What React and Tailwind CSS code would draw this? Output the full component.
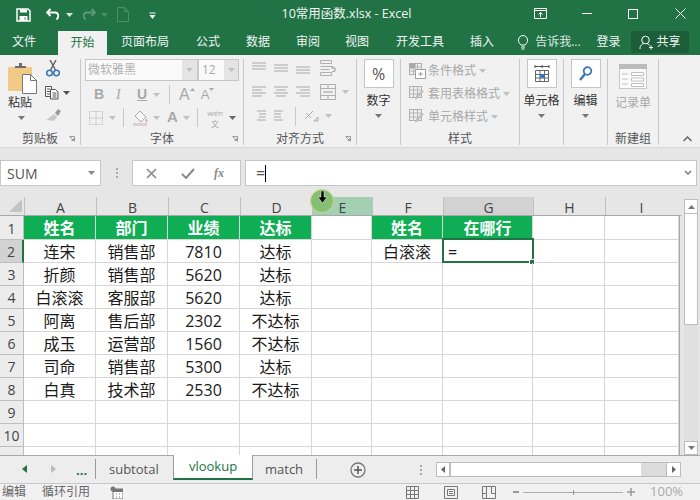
const rows = [
  ['连宋', '销售部', '7810', '达标'],
  ['折颜', '销售部', '5620', '达标'],
  ['白滚滚', '客服部', '5620', '达标'],
  ['阿离', '售后部', '2302', '不达标'],
  ['成玉', '运营部', '1560', '不达标'],
  ['司命', '销售部', '5300', '达标'],
  ['白真', '技术部', '2530', '不达标'],
  ['', '', '', ''],
  ['', '', '', ''],
];

const tabs = [
  { label: '页面布局', cls: 'ml-[14px]' },
  { label: '公式', cls: 'ml-[27px]' },
  { label: '数据', cls: 'ml-[26px]' },
  { label: '审阅', cls: 'ml-[26px]' },
  { label: '视图', cls: 'ml-[25px]' },
  { label: '开发工具', cls: 'ml-[27px]' },
  { label: '插入', cls: 'ml-[26px]' },
];

const colLetters = [
  ['A', 'w-[72px]'],
  ['B', 'w-[72px]'],
  ['C', 'w-[72px]'],
  ['D', 'w-[72px]'],
  ['E', 'w-[60px] bg-[#a3d0b2]'],
  ['F', 'w-[71px]'],
  ['G', 'w-[90px] bg-[#d2d2d2]'],
  ['H', 'w-[72px]'],
  ['I', 'w-[72px]'],
];

function Caret({ className = '', color = '#777' }) {
  return (
    <svg width="7" height="4" viewBox="0 0 7 4" className={className}>
      <path d="M0 0h7L3.5 4z" fill={color} />
    </svg>
  );
}

function Launcher({ className = '' }) {
  return (
    <svg width="6" height="6" viewBox="0 0 6 6" className={className}>
      <path d="M0.5 0.5h5v5M1 1l3.5 3.5M4.5 2.5v2h-2" fill="none" stroke="#999" strokeWidth="1" />
    </svg>
  );
}

function Lines({ ys, xs }) {
  return (
    <svg width="16" height="14" viewBox="0 0 16 14">
      {ys.map((y, i) => (
        <path key={i} d={`M${xs ? xs[i][0] : 1} ${y}H${xs ? xs[i][1] : 15}`} stroke="#a8a8a8" strokeWidth="1" />
      ))}
    </svg>
  );
}

function Group({ width, label, children, launcher }) {
  return (
    <div className={`${width} h-[86px] mt-[4px] flex flex-col border-r border-[#c8c8c8] shrink-0 relative`}>
      <div className="flex-1 min-h-0">{children}</div>
      <div className="h-[12px] flex items-center justify-center text-[12px] leading-none text-[#555]">
        {label}
      </div>
      {launcher && <Launcher className="absolute right-[5px] bottom-[3px]" />}
    </div>
  );
}

function BigButton({ icon, label, caret = true }) {
  return (
    <div className="flex flex-col items-center">
      <div className="w-[30px] h-[29px] bg-white border border-[#c6c6c6] flex items-center justify-center">{icon}</div>
      <div className="mt-[6px] text-[12px] leading-[14px] text-[#333] whitespace-nowrap">{label}</div>
      {caret && <Caret className="mt-[6px]" />}
    </div>
  );
}

function StyleRow({ icon, label }) {
  return (
    <div className="h-[23px] flex items-center pl-[8px]">
      <div className="w-[19px] h-[17px] flex items-center">{icon}</div>
      <span className="text-[12px] text-[#a8a8a8] whitespace-nowrap">{label}</span>
      <Caret className="ml-[3px]" color="#c0c0c0" />
    </div>
  );
}

function StyleIcon({ variant }) {
  return (
    <svg width="17" height="17" viewBox="0 0 17 17">
      <rect x="0.5" y="1.5" width="12" height="11" fill="#eee" stroke="#b0b0b0" />
      <path d="M0.5 5h12M0.5 9h12M4.500 1.500v11M8.500 1.500v11" stroke="#b8b8b8" />
      {variant === 0 ? (
        <>
          <rect x="0.5" y="1.500" width="6" height="5" fill="#a8a8a8" />
          <rect x="6.500" y="7.500" width="10" height="9" fill="#fff" stroke="#a0a0a0" />
          <path d="M9 12h5M11.500 10v4" stroke="#a0a0a0" />
        </>
      ) : (
        <path d="M15 6l-6 7-3 2 1-4 6-6z" fill="#bdbdbd" />
      )}
    </svg>
  );
}

function Ribbon() {
  return (
    <div className="h-[93px] bg-[#f1f1f1] flex text-[#444] border-b border-[#d8d8d8]">
      <Group width="w-[81px]" label="剪贴板" launcher>
        <div className="flex pl-[8px] pt-[4px]">
          <div className="w-[36px]">
            <svg width="29" height="31" viewBox="0 0 29 31">
              <rect x="0" y="4" width="24" height="24" rx="1" fill="#f1cb85" />
              <path d="M7 5V3h4V0h3v3h4v2z" fill="#6d6d6d" />
              <path d="M14.500 11.500h8l6 6v13h-14z" fill="#fff" stroke="#777" />
              <path d="M22.500 11.500v6h6" fill="none" stroke="#777" />
            </svg>
            <div className="text-[12px] leading-[14px] text-[#333] mt-[2px]">粘贴</div>
            <Caret className="ml-[10px] mt-[6px]" />
          </div>
          <div className="flex flex-col items-start -mt-[3px]">
            <svg width="14" height="17" viewBox="0 0 14 17" className="ml-[2px]">
              <path d="M4 0l6 11M10 0L4 11" stroke="#666" strokeWidth="1.500" />
              <circle cx="3.500" cy="13" r="2.800" fill="none" stroke="#3a76b8" strokeWidth="1.500" />
              <circle cx="10.500" cy="13" r="2.800" fill="none" stroke="#3a76b8" strokeWidth="1.500" />
            </svg>
            <div className="flex items-center mt-[8px]">
              <svg width="15" height="15" viewBox="0 0 15 15">
                <path d="M1.500 1.500h6v10h-6zM3 4h3M3 6.500h3M3 9h3" fill="#fff" stroke="#555" />
                <path d="M6.500 4.500h5l2.500 2.500v7h-7.500z" fill="#fff" stroke="#555" />
                <path d="M8.500 8h4M8.500 10h4M8.500 12h4" stroke="#555" />
              </svg>
              <Caret className="ml-[4px]" color="#555" />
            </div>
            <svg width="16" height="13" viewBox="0 0 16 13" className="mt-[9px] ml-[1px]">
              <path d="M9 5l3 3-3 4-8-1c2-1 4-3 8-6z" fill="#c8c8c8" />
              <path d="M10 4l3-4 3 2-3 5z" fill="#9a9a9a" />
            </svg>
          </div>
        </div>
      </Group>

      <Group width="w-[163px]" label="字体" launcher>
        <div className="pl-[4px]">
          <div className="w-[154px] h-[22px] flex border border-[#c6c6c6] bg-[#fafafa]">
            <div className="w-[113px] flex items-center pl-[2px] text-[12px] text-[#b0b0b0] border-r-2 border-[#c9c9c9] bg-[#fafafa] relative">
              微软雅黑
              <div className="absolute right-0 top-0 bottom-0 w-[15px] bg-[#e4e4e4] flex items-center justify-center">
                <Caret color="#c0c0c0" />
              </div>
            </div>
            <div className="flex-1 flex items-center pl-[3px] text-[12px] text-[#aaa] relative">
              12
              <div className="absolute right-0 top-0 bottom-0 w-[14px] bg-[#e4e4e4] flex items-center justify-center">
                <Caret color="#c0c0c0" />
              </div>
            </div>
          </div>
          <div className="h-[23px] mt-[2px] flex items-center text-[#a8a8a8] font-['Liberation_Serif',serif]">
            <span className="ml-[9px] w-[22px] text-[14px] font-bold font-['Liberation_Sans',sans-serif]">B</span>
            <span className="w-[21px] text-[14px] italic">I</span>
            <span className="w-[16px] text-[14px] underline font-bold font-['Liberation_Sans',sans-serif]">U</span>
            <Caret color="#c0c0c0" />
            <div className="ml-[9px] w-px h-[19px] bg-[#c8c8c8]" />
            <span className="ml-[9px] text-[16px] leading-none font-['Liberation_Sans',sans-serif]">A</span>
            <svg width="5" height="3" viewBox="0 0 5 3" className="mb-[10px]"><path d="M2.500 0L5 3H0z" fill="#a8a8a8" /></svg>
            <span className="ml-[6px] text-[13px] leading-none font-['Liberation_Sans',sans-serif]">A</span>
            <svg width="5" height="3" viewBox="0 0 5 3" className="mb-[10px]"><path d="M0 0h5L2.500 3z" fill="#a8a8a8" /></svg>
          </div>
          <div className="h-[23px] flex items-center text-[#a8a8a8]">
            <svg width="14" height="14" viewBox="0 0 14 14" className="ml-[4px]">
              <path d="M0.500 0.500h13v13h-13zM0.500 7h13M7 0.500v13" fill="none" stroke="#b4b4b4" strokeDasharray="1 1" />
            </svg>
            <Caret className="ml-[6px]" color="#c0c0c0" />
            <div className="ml-[7px] w-px h-[19px] bg-[#c8c8c8]" />
            <svg width="16" height="16" viewBox="0 0 16 16" className="ml-[9px]">
              <path d="M7 1l6 6-5 5-6-6z" fill="#f5f5f5" stroke="#aaa" />
              <path d="M13 8c1 2 2 3 1 4s-2 0-1-4z" fill="#aaa" />
              <rect x="0" y="13" width="14" height="3" fill="#e3cfd2" />
            </svg>
            <Caret className="ml-[4px]" color="#c0c0c0" />
            <span className="ml-[7px] w-[16px] text-[15px] font-bold font-['Liberation_Sans',sans-serif]">A</span>
            <Caret color="#c0c0c0" />
            <div className="ml-[7px] w-px h-[19px] bg-[#c8c8c8]" />
            <div className="ml-[8px] w-[18px] flex flex-col items-center">
              <span className="text-[8px] leading-[11px]">wén</span>
              <span className="text-[8px] leading-[11px]">文</span>
            </div>
            <Caret className="ml-[5px]" color="#666" />
          </div>
        </div>
      </Group>

      <Group width="w-[113px]" label="对齐方式" launcher>
        <div className="pl-[7px] -mt-[3px]">
          <div className="h-[24px] flex items-center gap-[6px]">
            <Lines ys={[2, 5, 8]} />
            <Lines ys={[4, 7, 10]} />
            <Lines ys={[6, 9, 12]} />
            <svg width="16" height="16" viewBox="0 0 16 16" className="ml-[3px]">
              <path d="M0.500 0.500h11v3h-11zM0.500 6.500h13M0.500 9.500h9M0.500 12.500h11v3h-11z" fill="none" stroke="#b0b0b0" />
              <path d="M11 8h4v3l-3 1" fill="none" stroke="#999" />
            </svg>
          </div>
          <div className="h-[24px] flex items-center gap-[6px]">
            <Lines ys={[2, 5, 8, 11]} xs={[[1, 15], [1, 11], [1, 15], [1, 11]]} />
            <Lines ys={[2, 5, 8, 11]} xs={[[1, 15], [3, 13], [1, 15], [3, 13]]} />
            <Lines ys={[2, 5, 8, 11]} xs={[[1, 15], [5, 15], [1, 15], [5, 15]]} />
            <svg width="16" height="16" viewBox="0 0 16 16" className="ml-[3px]">
              <path d="M0.500 0.500h15v15h-15zM0.500 4.500h15M0.500 11.500h15M8 0.500v4M8 11.500v4" fill="none" stroke="#b0b0b0" />
              <path d="M3 8h10" stroke="#999" />
            </svg>
            <Caret color="#c0c0c0" />
          </div>
          <div className="h-[24px] flex items-center gap-[6px]">
            <Lines ys={[2, 5, 8, 11]} xs={[[6, 15], [8, 15], [8, 15], [6, 15]]} />
            <Lines ys={[2, 5, 8, 11]} xs={[[1, 10], [1, 8], [1, 8], [1, 10]]} />
            <div className="w-px h-[19px] bg-[#c8c8c8]" />
            <svg width="16" height="16" viewBox="0 0 16 16" className="ml-[1px]">
              <path d="M2 11L10 3M3 5l5 5M11 13l4-4M15 9v4h-4" fill="none" stroke="#aaa" />
            </svg>
            <Caret color="#c0c0c0" />
          </div>
        </div>
      </Group>

      <Group width="w-[44px]" label="">
        <BigButton
          label="数字"
          icon={<span className="text-[16px] leading-none text-[#555]">%</span>}
        />
      </Group>

      <Group width="w-[119px]" label="样式">
        <div>
          <StyleRow icon={<StyleIcon variant={0} />} label="条件格式" />
          <StyleRow icon={<StyleIcon variant={1} />} label="套用表格格式" />
          <StyleRow icon={<StyleIcon variant={1} />} label="单元格样式" />
        </div>
      </Group>

      <Group width="w-[44px]" label="">
        <BigButton
          label="单元格"
          icon={
            <svg width="16" height="18" viewBox="0 0 16 18">
              <path d="M1 1.500h14M1 0v3M15 0v3M8 0v3" stroke="#555" fill="none" />
              <path d="M1.500 5.500h13v11h-13zM1.500 9.500h13M1.500 13h13M6 5.500v11M10.500 5.500v11" fill="none" stroke="#666" />
              <rect x="6" y="9" width="5" height="4" fill="#3a76b8" />
            </svg>
          }
        />
      </Group>

      <Group width="w-[44px]" label="">
        <BigButton
          label="编辑"
          icon={
            <svg width="14" height="16" viewBox="0 0 14 16">
              <circle cx="8.500" cy="5" r="3.800" fill="none" stroke="#3a76b8" strokeWidth="1.800" />
              <path d="M6 8l-5 6" stroke="#3a76b8" strokeWidth="2.400" />
            </svg>
          }
        />
      </Group>

      <Group width="w-[51px]" label="新建组">
        <div className="flex flex-col items-center pt-[5px]">
          <svg width="28" height="25" viewBox="0 0 28 25">
            <rect x="0.500" y="0.500" width="27" height="24" fill="#fafafa" stroke="#c8c8c8" />
            <rect x="0" y="0" width="28" height="5" fill="#bcbcbc" />
            <path d="M3 10h6M3 15h6M3 20h6" stroke="#c0c0c0" />
            <path d="M12.500 8.500h12v3h-12zM12.500 14h12v3h-12zM12.500 19.500h12v3h-12z" fill="#fff" stroke="#c0c0c0" />
          </svg>
          <div className="mt-[7px] text-[12px] leading-[14px] text-[#a8a8a8] whitespace-nowrap">记录单</div>
        </div>
      </Group>

      <div className="flex-1 flex items-end justify-end pr-[8px] pb-[5px]">
        <svg width="9" height="6" viewBox="0 0 9 6">
          <path d="M0.500 5l4-4 4 4" fill="none" stroke="#666" strokeWidth="1.500" />
        </svg>
      </div>
    </div>
  );
}

function TitleBar() {
  return (
    <div className="h-[31px] bg-[#217346] flex items-center text-white relative">
      <svg width="15" height="14" viewBox="0 0 15 14" className="ml-[16px] -mt-[2px]">
        <path d="M1 1h11l2 2v10H1z" fill="none" stroke="#fff" strokeWidth="1.500" />
        <path d="M4 1.500h7v3H4zM3.500 8h8v5h-8z" fill="#fff" />
        <path d="M8.500 9.500h1v2h-1z" fill="#217346" />
      </svg>
      <svg width="15" height="13" viewBox="0 0 15 13" className="ml-[15px] -mt-[2px]">
        <path d="M4.500 1L1 4.500 4.500 8" fill="none" stroke="#fff" strokeWidth="1.800" />
        <path d="M1.500 4.500H9c3.500 0 4.500 4 1.500 7" fill="none" stroke="#fff" strokeWidth="1.800" />
      </svg>
      <Caret className="ml-[5px] -mt-[2px]" color="#d7e8dd" />
      <svg width="14" height="13" viewBox="0 0 14 13" className="ml-[9px] -mt-[2px]">
        <path d="M9.500 1L13 4.500 9.500 8" fill="none" stroke="#5b9a76" strokeWidth="1.800" />
        <path d="M12.500 4.500H5C1.500 4.500 0.500 8.500 3.500 11.500" fill="none" stroke="#5b9a76" strokeWidth="1.800" />
      </svg>
      <Caret className="ml-[5px] -mt-[2px]" color="#4e9068" />
      <svg width="12" height="15" viewBox="0 0 12 15" className="ml-[9px] -mt-[2px]">
        <path d="M0.500 0.500h7l4 4v10h-11zM7.500 0.500v4h4" fill="none" stroke="#4e9068" />
      </svg>
      <svg width="7" height="7" viewBox="0 0 7 7" className="ml-[20px]">
        <path d="M0.500 1h6" stroke="#fff" />
        <path d="M0.500 3h6L3.500 7z" fill="#fff" />
      </svg>
      <div className="absolute left-0 right-0 top-[5px] pr-[7px] text-center text-[12.5px] leading-[18px] text-[#f2f7f4]">
        10常用函数.xlsx - Excel
      </div>
      <div className="ml-auto flex items-center -mt-[4px]">
        <svg width="13" height="11" viewBox="0 0 13 11">
          <path d="M0.500 0.500h12v10h-12zM0.500 2.500h12M6.500 9V4.500M4.500 6.500l2-2 2 2" fill="none" stroke="#fff" />
        </svg>
        <div className="ml-[35px] w-[10px] h-px bg-white" />
        <div className="ml-[36px] w-[10px] h-[10px] border border-white" />
        <svg width="11" height="11" viewBox="0 0 11 11" className="ml-[37px] mr-[14px]">
          <path d="M0.500 0.500l10 10M10.500 0.500l-10 10" stroke="#fff" />
        </svg>
      </div>
    </div>
  );
}

function TabBar() {
  return (
    <div className="h-[24px] bg-[#217346] flex text-[12px] text-[#f0f5f2] relative">
      <span className="ml-[12px] mt-[3px] leading-[16px]">文件</span>
      <div className="ml-[22px] w-[49px] h-[24px] bg-[#f1f1f1] text-[#217346] flex items-center justify-center leading-none">开始</div>
      {tabs.map((t) => (
        <span key={t.label} className={`${t.cls} mt-[3px] leading-[16px]`}>{t.label}</span>
      ))}
      <svg width="10" height="15" viewBox="0 0 10 15" className="ml-[24px] mt-[4px]">
        <path d="M3 10C1 8 0.500 7 0.500 5a4.500 4.500 0 019 0c0 2-.5 3-2.500 5zM3 12h4M3.500 14h3" fill="none" stroke="#fff" />
      </svg>
      <span className="ml-[7px] mt-[3px] leading-[16px] text-[#dce9e1]">告诉我...</span>
      <span className="ml-[16px] mt-[3px] leading-[16px]">登录</span>
      <div className="ml-[10px] w-[58px] h-[22px] bg-[#1b5e39] flex items-center justify-center gap-[3px]">
        <svg width="15" height="15" viewBox="0 0 15 15">
          <circle cx="6.500" cy="5" r="3.800" fill="none" stroke="#fff" />
          <path d="M1 14c0-4 2-5 4-5.500M8 8.500c1 .3 2 1 2.500 2M10 12.500h4M12 10.500v4" fill="none" stroke="#fff" />
        </svg>
        <span>共享</span>
      </div>
    </div>
  );
}

function FormulaBar() {
  return (
    <div className="h-[49px] pt-[12px] flex">
      <div className="w-[101px] h-[26px] bg-white border border-[#c6c6c6] flex items-center justify-between pl-[6px] pr-[5px] text-[14px] text-[#555]">
        SUM
        <Caret color="#888" />
      </div>
      <div className="w-[31px] flex items-center justify-center h-[26px]">
        <div className="h-[10px] border-l-2 border-dotted border-[#aaa]" />
      </div>
      <div className="w-[109px] h-[26px] bg-white border border-[#c6c6c6] flex items-center text-[#8a8a8a]">
        <svg width="11" height="11" viewBox="0 0 11 11" className="ml-[13px]">
          <path d="M1 1l9 9M10 1l-9 9" stroke="#8a8a8a" strokeWidth="1.600" />
        </svg>
        <svg width="14" height="11" viewBox="0 0 14 11" className="ml-[24px]">
          <path d="M1 6l4 4 8-9" fill="none" stroke="#8a8a8a" strokeWidth="2" />
        </svg>
        <span className="ml-[19px] text-[12px] italic font-bold font-['Liberation_Serif',serif]">fx</span>
      </div>
      <div className="ml-[4px] w-[452px] h-[26px] bg-white border border-[#c6c6c6] flex items-center pl-[10px] text-[16px] text-[#555]">
        <span>=</span>
        <div className="w-px h-[17px] bg-black" />
        <svg width="8" height="6" viewBox="0 0 8 6" className="ml-auto mr-[4px]">
          <path d="M1 1l3 3 3-3" fill="none" stroke="#777" strokeWidth="1.500" />
        </svg>
      </div>
    </div>
  );
}

function Cell({ className = '', children }) {
  return (
    <div className={`border-r border-b border-[#d6d6d6] pt-px flex items-center justify-center text-[16px] leading-[20px] text-[#1a1a1a] whitespace-nowrap ${className}`}>
      {children}
    </div>
  );
}

function RowHead({ n, active, className = '' }) {
  return (
    <div className={`w-[24px] shrink-0 border-r border-b border-[#bdbdbd] flex items-end justify-center text-[14px] leading-[20px] text-[#444] ${active ? 'bg-[#d2d2d2] border-r-2 border-r-[#217346]' : 'bg-[#ececec]'} ${className}`}>
      {n}
    </div>
  );
}

function Sheet() {
  return (
    <div className="relative flex-1 min-w-0">
      <div className="flex h-[19px] bg-[#e6e6e6] border-b border-[#a8a8a8]">
        <div className="w-[24px] flex items-end justify-end pr-[2px] pb-[3px]">
          <svg width="13" height="13" viewBox="0 0 13 13">
            <path d="M13 0v13H0z" fill="#c4c4c4" />
          </svg>
        </div>
        {colLetters.map(([l, cls]) => (
          <div key={l} className={`${cls} border-l border-[#c0c0c0] flex items-center justify-center pt-[3px] text-[14px] leading-[15px] text-[#444]`}>
            {l}
          </div>
        ))}
      </div>

      <div className="border-r border-[#a8a8a8] w-[680px] bg-white">
        <div className="flex h-[24px]">
          <RowHead n="1" />
          {['姓名', '部门', '业绩', '达标'].map((h) => (
            <Cell key={h} className="w-[72px] bg-[#0fae55] !text-white font-bold">{h}</Cell>
          ))}
          <Cell className="w-[60px]" />
          <Cell className="w-[71px] bg-[#0fae55] !text-white font-bold">姓名</Cell>
          <Cell className="w-[90px] bg-[#0fae55] !text-white font-bold">在哪行</Cell>
          <Cell className="w-[72px]" />
          <Cell className="flex-1" />
        </div>
        {rows.map((r, i) => (
          <div key={i} className="flex h-[23px]">
            <RowHead n={i + 2} active={i === 0} />
            {r.map((c, j) => (
              <Cell key={j} className="w-[72px]">{c}</Cell>
            ))}
            <Cell className="w-[60px]" />
            <Cell className="w-[71px]">{i === 0 ? '白滚滚' : ''}</Cell>
            <Cell className="w-[90px] relative !justify-start">
              {i === 0 && (
                <>
                  <div className="absolute -left-[1px] -top-[2px] w-[92px] h-[25px] border-2 border-[#217346]" />
                  <div className="absolute -right-[3px] -bottom-[3px] w-[6px] h-[6px] bg-[#217346] border border-white" />
                  <span className="pl-[5px]">=</span>
                </>
              )}
            </Cell>
            <Cell className="w-[72px]" />
            <Cell className="flex-1" />
          </div>
        ))}
        <div className="flex h-[8px]">
          <RowHead n="" className="border-b-0" />
          {[0, 1, 2, 3].map((i) => (
            <Cell key={i} className="w-[72px] border-b-0" />
          ))}
          <Cell className="w-[60px] border-b-0" />
          <Cell className="w-[71px] border-b-0" />
          <Cell className="w-[90px] border-b-0" />
          <Cell className="w-[72px] border-b-0" />
          <Cell className="flex-1 border-b-0" />
        </div>
      </div>

      {/* mouse highlight */}
      <div className="absolute left-[310px] -top-[8px] w-[24px] h-[24px] rounded-full bg-[#84bf74] border border-[#d5d58f] flex justify-center pt-[1px]">
        <svg width="9" height="12" viewBox="0 0 9 12">
          <path d="M3 0h3v6h3l-4.500 6L0 6h3z" fill="#000" stroke="#fff" strokeWidth="0.500" />
        </svg>
      </div>
    </div>
  );
}

function VScroll() {
  return (
    <div className="w-[19px] shrink-0 pl-[3px] pr-[2px] pt-[2px] flex flex-col">
      <div className="h-[15px] bg-white border border-[#bdbdbd] flex items-center justify-center">
        <svg width="7" height="4" viewBox="0 0 7 4"><path d="M3.500 0L7 4H0z" fill="#777" /></svg>
      </div>
      <div className="h-[111px] bg-white border-x border-b border-[#bdbdbd]" />
      <div className="flex-1 bg-[#e0e0e0]" />
      <div className="h-[14px] bg-white border border-[#bdbdbd] flex items-center justify-center">
        <Caret />
      </div>
    </div>
  );
}

function SheetTabs() {
  return (
    <div className="h-[28px] bg-[#ededed] border-t border-[#a8a8a8] flex text-[13px] text-[#555] relative">
      <svg width="5" height="8" viewBox="0 0 5 8" className="ml-[22px] mt-[9px]"><path d="M5 0v8L0 4z" fill="#217346" /></svg>
      <svg width="5" height="8" viewBox="0 0 5 8" className="ml-[24px] mt-[9px]"><path d="M0 0v8l5-4z" fill="#bbb" /></svg>
      <span className="ml-[20px] w-[12px] mt-[5px] leading-[18px] text-[#217346] font-bold">...</span>
      <div className="ml-[7px] mt-[3px] w-px h-[20px] bg-[#999]" />
      <span className="ml-[13px] w-[50px] mt-[3px] leading-[20px]">subtotal</span>
      <div className="ml-[14px] -mt-px w-[80px] h-[25px] bg-white border-x border-b-2 border-[#9a9a9a] border-b-[#217346] flex items-center justify-center text-[#217346]">
        vlookup
      </div>
      <span className="ml-[12px] w-[38px] mt-[3px] leading-[20px]">match</span>
      <div className="ml-[13px] mt-[3px] w-px h-[20px] bg-[#999]" />
      <svg width="16" height="16" viewBox="0 0 16 16" className="ml-[33px] mt-[6px]">
        <circle cx="8" cy="8" r="7" fill="none" stroke="#777" strokeWidth="1.300" />
        <path d="M4 8h8M8 4v8" stroke="#555" strokeWidth="1.500" />
      </svg>
      <div className="ml-[54px] mt-[9px] h-[10px] border-l-2 border-dotted border-[#aaa]" />
      <div className="ml-[14px] mt-[6px] w-[245px] h-[15px] flex bg-white border border-[#bdbdbd]">
        <div className="w-[14px] flex items-center justify-center border-r-2 border-[#bdbdbd]">
          <svg width="4" height="7" viewBox="0 0 4 7"><path d="M4 0v7L0 3.500z" fill="#666" /></svg>
        </div>
        <div className="w-[190px] bg-white" />
        <div className="flex-1 bg-[#dcdcdc]" />
        <div className="w-[14px] flex items-center justify-center border-l border-[#bdbdbd]">
          <svg width="4" height="7" viewBox="0 0 4 7"><path d="M0 0v7l4-3.500z" fill="#666" /></svg>
        </div>
      </div>
    </div>
  );
}

function StatusBar() {
  return (
    <div className="h-[17px] bg-[#f1f1f1] border-t border-[#c8c8c8] flex items-center text-[12px] text-[#666]">
      <span className="ml-[2px]">编辑</span>
      <span className="ml-[16px]">循环引用</span>
      <svg width="13" height="13" viewBox="0 0 13 13" className="ml-[20px]">
        <circle cx="3" cy="3" r="2.500" fill="#777" />
        <rect x="3" y="3" width="10" height="10" fill="#fff" stroke="#777" />
        <path d="M3 3h10v3H3z" fill="#777" />
        <path d="M6 8h1M9 8h1M6 11h1M9 11h1" stroke="#777" />
      </svg>
      <svg width="13" height="13" viewBox="0 0 13 13" className="ml-[283px]">
        <path d="M0.500 0.500h12v12h-12zM0.500 4.500h12M0.500 8.500h12M4.500 0.500v12M8.500 0.500v12" fill="none" stroke="#777" />
      </svg>
      <svg width="14" height="13" viewBox="0 0 14 13" className="ml-[25px]">
        <path d="M0.500 0.500h13v12h-13zM3.500 3.500h7v6h-7zM5 5.500h4M5 7.500h4" fill="none" stroke="#777" />
      </svg>
      <svg width="14" height="13" viewBox="0 0 14 13" className="ml-[24px]">
        <path d="M0.500 0.500h13v12h-13zM0.500 7.500h4v5M4.500 7.500V0.500M9.500 0.500v7h4" fill="none" stroke="#777" />
      </svg>
      <div className="ml-[17px] w-[6px] h-[2px] bg-[#999]" />
      <div className="ml-[4px] w-[100px] h-px bg-[#aaa] relative">
        <div className="absolute left-[50px] -top-[2px] w-px h-[5px] bg-[#999]" />
      </div>
      <svg width="8" height="8" viewBox="0 0 8 8" className="ml-[4px]">
        <path d="M0 4h8M4 0v8" stroke="#999" strokeWidth="1.500" />
      </svg>
      <span className="ml-[15px] text-[13px] text-[#aaa]">100%</span>
    </div>
  );
}

export default function App() {
  return (
    <div className="w-[700px] h-[500px] overflow-hidden flex flex-col bg-[#e6e6e6] font-['Open_Sans','Noto_Sans_CJK_SC',sans-serif]">
      <TitleBar />
      <TabBar />
      <Ribbon />
      <FormulaBar />
      <div className="flex h-[258px]">
        <Sheet />
        <VScroll />
      </div>
      <SheetTabs />
      <StatusBar />
    </div>
  );
}
